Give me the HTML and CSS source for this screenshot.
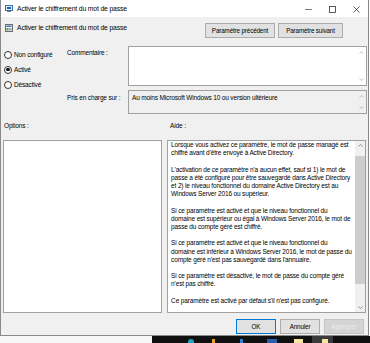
FILE: index.html
```html
<!DOCTYPE html>
<html lang="fr">
<head>
    <meta charset="UTF-8">
    <title>Activer le chiffrement du mot de passe</title>
    <link rel="stylesheet" href="styles.css">
</head>
<body>
<div class="window">
    <div class="titlebar">
        <svg class="app-icon" width="8" height="7" viewBox="0 0 8 7">
            <rect x="0.5" y="0.5" width="7" height="5" fill="#dfe9f5" stroke="#3b6fb6"/>
            <rect x="2" y="2" width="4" height="2" fill="#2a5fb0"/>
            <rect x="2" y="6" width="4" height="1" fill="#7a7a7a"/>
        </svg>
        <span class="title">Activer le chiffrement du mot de passe</span>
        <div class="controls">
            <svg width="7" height="7" viewBox="0 0 7 7"><line x1="0" y1="3.5" x2="7" y2="3.5" stroke="#555" stroke-width="0.8"/></svg>
            <svg width="7" height="7" viewBox="0 0 7 7"><rect x="0.5" y="0.5" width="6" height="6" fill="none" stroke="#333" stroke-width="0.8"/></svg>
            <svg width="7" height="7" viewBox="0 0 7 7"><path d="M0.5 0.5 L6.5 6.5 M6.5 0.5 L0.5 6.5" stroke="#333" stroke-width="0.8"/></svg>
        </div>
    </div>

    <div class="header">
        <svg class="policy-icon" width="8" height="8" viewBox="0 0 8 8">
            <rect x="0.5" y="0.5" width="7" height="7" fill="#f4f4f4" stroke="#6d6d6d"/>
            <rect x="1.5" y="1.5" width="5" height="1.5" fill="#3a78c4"/>
            <rect x="1.5" y="4" width="2" height="2.5" fill="#4aa05a"/>
            <rect x="4" y="4" width="2.5" height="2.5" fill="#9aa7b5"/>
        </svg>
        <span class="policy-name">Activer le chiffrement du mot de passe</span>
        <div class="nav">
            <button class="btn btn-prev">Paramètre précédent</button>
            <button class="btn btn-next">Paramètre suivant</button>
        </div>
    </div>

    <div class="settings">
        <div class="choices">
            <label class="radio"><span class="dot"></span>Non configuré</label>
            <label class="radio"><span class="dot checked"></span>Activé</label>
            <label class="radio"><span class="dot"></span>Désactivé</label>
        </div>
        <div class="fields">
            <span class="field-label">Commentaire :</span>
            <div class="box comment">
                <div class="arrows">
                    <svg width="5" height="3" viewBox="0 0 5 3"><path d="M0.5 2.5 L2.5 0.5 L4.5 2.5" fill="none" stroke="#a8a8a8" stroke-width="0.7"/></svg>
                    <svg width="5" height="3" viewBox="0 0 5 3"><path d="M0.5 0.5 L2.5 2.5 L4.5 0.5" fill="none" stroke="#a8a8a8" stroke-width="0.7"/></svg>
                </div>
            </div>
            <span class="field-label supported-label">Pris en charge sur :</span>
            <div class="box supported">
                <span>Au moins Microsoft Windows 10 ou version ultérieure</span>
                <div class="arrows">
                    <svg width="5" height="3" viewBox="0 0 5 3"><path d="M0.5 2.5 L2.5 0.5 L4.5 2.5" fill="none" stroke="#a8a8a8" stroke-width="0.7"/></svg>
                    <svg width="5" height="3" viewBox="0 0 5 3"><path d="M0.5 0.5 L2.5 2.5 L4.5 0.5" fill="none" stroke="#a8a8a8" stroke-width="0.7"/></svg>
                </div>
            </div>
        </div>
    </div>

    <div class="panels">
        <div class="panel options">
            <span class="panel-label">Options :</span>
            <div class="panel-box"></div>
        </div>
        <div class="panel help">
            <span class="panel-label">Aide :</span>
            <div class="panel-box help-box">
                <div class="help-text">
                    <p>Lorsque vous activez ce paramètre, le mot de passe managé est<br>chiffré avant d'être envoyé à Active Directory.</p>
                    <p>L'activation de ce paramètre n'a aucun effet, sauf si 1) le mot de<br>passe a été configuré pour être sauvegardé dans Active Directory<br>et 2) le niveau fonctionnel du domaine Active Directory est au<br>Windows Server 2016 ou supérieur.</p>
                    <p>Si ce paramètre est activé et que le niveau fonctionnel du<br>domaine est supérieur ou égal à Windows Server 2016, le mot de<br>passe du compte géré est chiffré.</p>
                    <p>Si ce paramètre est activé et que le niveau fonctionnel du<br>domaine est inférieur à Windows Server 2016, le mot de passe du<br>compte géré n'est pas sauvegardé dans l'annuaire.</p>
                    <p>Si ce paramètre est désactivé, le mot de passe du compte géré<br>n'est pas chiffré.</p>
                    <p>Ce paramètre est activé par défaut s'il n'est pas configuré.</p>
                    <p>Pour plus d'informations, consultez la documentation.</p>
                </div>
                <div class="scrollbar">
                    <svg width="5" height="3" viewBox="0 0 5 3"><path d="M0.5 2.5 L2.5 0.5 L4.5 2.5" fill="none" stroke="#606060" stroke-width="0.7"/></svg>
                    <div class="track"><div class="thumb"></div></div>
                    <svg width="5" height="3" viewBox="0 0 5 3"><path d="M0.5 0.5 L2.5 2.5 L4.5 0.5" fill="none" stroke="#606060" stroke-width="0.7"/></svg>
                </div>
            </div>
        </div>
    </div>

    <div class="actions">
        <button class="btn btn-small btn-default">OK</button>
        <button class="btn btn-small">Annuler</button>
        <button class="btn btn-small" disabled>Appliquer</button>
    </div>
</div>

<div class="bottom">
    <div class="desk"></div>
    <div class="taskbar">
        <span class="tb-icon teal"></span>
        <span class="tb-icon orange"></span>
        <span class="tb-icon blue"></span>
        <span class="tb-icon blue wide"></span>
        <span class="tb-icon yellow"></span>
        <span class="tb-slot"><span class="tb-icon yellow"></span></span>
    </div>
</div>
</body>
</html>
```

FILE: styles.css
```css
body {
    margin: 0;
    background-color: #f6f6f6;
    font-family: "Liberation Sans", Arial, sans-serif;
    font-size: 6.5px;
    letter-spacing: -0.15px;
    color: #000;
}

.window {
    width: 367px;
    height: 335px;
    background-color: #f0f0f0;
    border: 1px solid #8a8a8a;
    border-top: none;
    display: flex;
    flex-direction: column;
}

.titlebar {
    height: 17px;
    background-color: #fff;
    display: flex;
    align-items: center;
    padding-left: 4px;
    padding-bottom: 1px;
    box-sizing: border-box;
}

.app-icon {
    margin-right: 4px;
}

.title {
    font-size: 6.8px;
}

.controls {
    margin-left: auto;
    display: flex;
    gap: 17px;
    padding-right: 8px;
    padding-top: 3px;
}

.header {
    height: 28px;
    display: flex;
    align-items: flex-start;
    padding: 6px 25px 0 4px;
    box-sizing: border-box;
}

.policy-icon {
    margin-top: 1px;
    margin-right: 4px;
}

.policy-name {
    font-size: 6.8px;
    line-height: 9px;
}

.nav {
    margin-left: auto;
    display: flex;
    gap: 3px;
}

.btn {
    font-family: "Liberation Sans", Arial, sans-serif;
    font-size: 6.3px;
    letter-spacing: -0.15px;
    height: 15px;
    padding: 0;
    background-color: #e1e1e1;
    border: 1px solid #adadad;
    color: #000;
}

.btn-prev {
    width: 70px;
}

.btn-next {
    width: 65px;
}

.settings {
    display: flex;
    padding: 1px 1px 0 3px;
}

.choices {
    width: 63px;
    display: flex;
    flex-direction: column;
    gap: 6px;
    padding-top: 4px;
}

.radio {
    display: flex;
    align-items: center;
    gap: 2px;
    line-height: 9px;
}

.dot {
    width: 6px;
    height: 6px;
    border: 0.8px solid #333;
    border-radius: 50%;
    background-color: #fff;
    display: flex;
    align-items: center;
    justify-content: center;
}

.dot.checked::after {
    content: "";
    width: 3.4px;
    height: 3.4px;
    border-radius: 50%;
    background-color: #111;
}

.fields {
    flex: 1;
    display: grid;
    grid-template-columns: 61px 1fr;
    row-gap: 4px;
}

.field-label {
    line-height: 9px;
    padding-top: 2px;
}

.supported-label {
    padding-top: 3px;
}

.box {
    border: 1px solid #a0a0a0;
    position: relative;
    display: flex;
}

.comment {
    height: 38px;
    background-color: #fff;
}

.supported {
    height: 22px;
    background-color: #f0f0f0;
}

.supported span {
    padding: 2px 0 0 3px;
    line-height: 9px;
}

.arrows {
    margin-left: auto;
    width: 9px;
    display: flex;
    flex-direction: column;
    justify-content: space-between;
    align-items: center;
    padding: 4px 0;
}

.panels {
    display: flex;
    gap: 5px;
    padding: 7px 2px 0 2px;
}

.panel {
    display: flex;
    flex-direction: column;
}

.panel-label {
    line-height: 9px;
    height: 9px;
    margin-bottom: 10px;
    padding-left: 1px;
}

.options {
    width: 160px;
}

.help {
    width: 200px;
}

.help .panel-label {
    padding-left: 3px;
}

.panel-box {
    height: 171px;
    background-color: #fff;
    border: 1px solid #a0a0a0;
}

.help-box {
    display: flex;
    overflow: hidden;
}

.help-text {
    flex: 1;
    padding: 0 0 0 3px;
    line-height: 8.2px;
    white-space: nowrap;
    overflow: hidden;
}

.help-text p {
    margin: 0 0 8.2px 0;
}

.scrollbar {
    width: 10px;
    background-color: #f0f0f0;
    display: flex;
    flex-direction: column;
    align-items: center;
    padding: 3px 0;
    gap: 4px;
}

.track {
    flex: 1;
    width: 100%;
}

.thumb {
    margin-top: 5px;
    height: 128px;
    background-color: #cdcdcd;
}

.actions {
    display: flex;
    justify-content: flex-end;
    gap: 4px;
    padding: 6px 4px 0 0;
}

.btn-small {
    width: 40px;
}

.btn-default {
    border-color: #0078d7;
}

.btn:disabled {
    background-color: #d4d4d4;
    border-color: #c4c4c4;
    color: #eaeaea;
}

.bottom {
    display: flex;
    height: 7px;
}

.desk {
    width: 152px;
}

.taskbar {
    flex: 1;
    background-color: #101010;
    position: relative;
}

.tb-icon {
    position: absolute;
    top: 3px;
    width: 6px;
    height: 4px;
}

.teal { background-color: #1aa3c4; left: 36px; border-radius: 3px 3px 0 0; }
.orange { background-color: #e8a020; left: 60px; width: 3px; }
.blue { background-color: #2f7fd6; left: 88px; width: 3px; }
.blue.wide { left: 115px; width: 10px; background-color: #2c5fb3; }
.yellow { background-color: #f3e6a0; left: 142px; width: 9px; }

.tb-slot {
    position: absolute;
    left: 160px;
    top: 0;
    width: 21px;
    height: 7px;
    background-color: #3a3a3a;
}

.tb-slot .yellow {
    left: 10px;
    width: 6px;
}
```
